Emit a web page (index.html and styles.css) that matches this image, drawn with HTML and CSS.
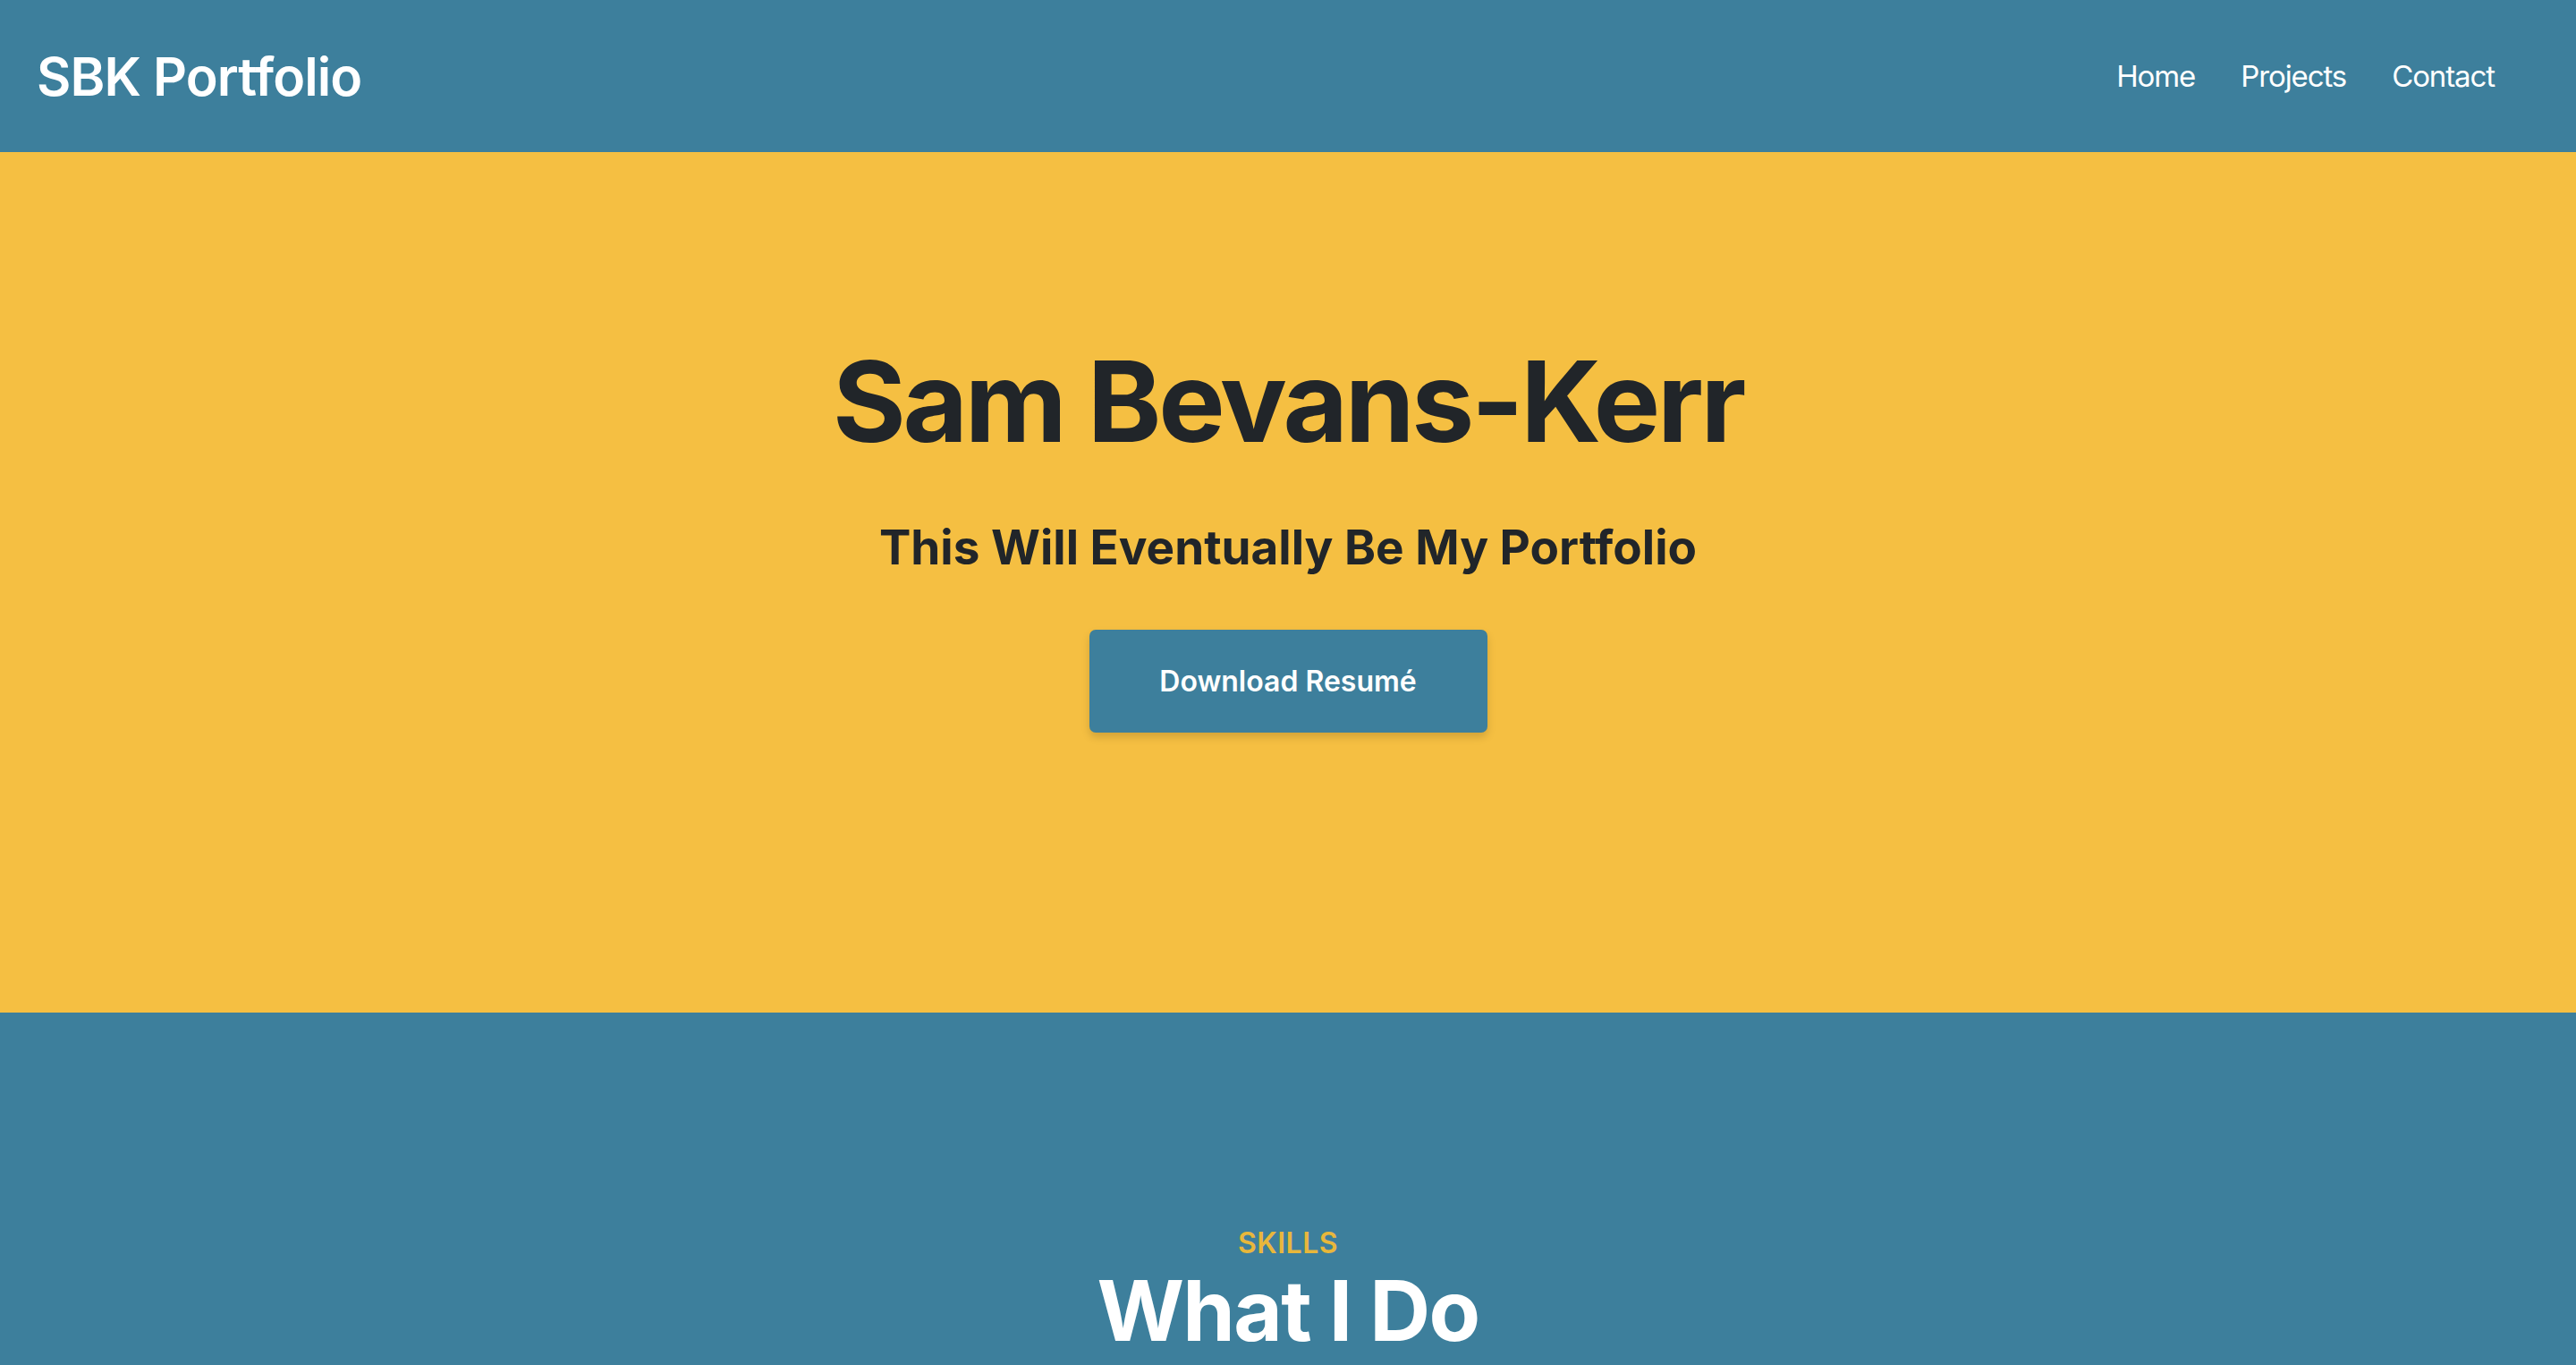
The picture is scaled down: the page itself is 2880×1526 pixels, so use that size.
FILE: index.html
```html
<!DOCTYPE html>
<html lang="en">
<head>
<meta charset="utf-8">
<title>SBK Portfolio</title>
<link rel="stylesheet" href="styles.css">
</head>
<body>
<header class="site-header">
  <a class="brand" href="#">SBK Portfolio</a>
  <nav class="nav">
    <a class="nav-link" href="#">Home</a>
    <a class="nav-link" href="#">Projects</a>
    <a class="nav-link" href="#">Contact</a>
  </nav>
</header>
<section class="hero">
  <h1 class="hero-title">Sam Bevans-Kerr</h1>
  <h2 class="hero-subtitle">This Will Eventually Be My Portfolio</h2>
  <a class="btn-resume" href="#">Download Resumé</a>
</section>
<section class="skills">
  <p class="eyebrow">SKILLS</p>
  <h2 class="section-title">What I Do</h2>
</section>
</body>
</html>
```
FILE: styles.css
```css
* { box-sizing: border-box; }
html, body {
  margin: 0;
  padding: 0;
  height: 1526px;
  overflow: hidden;
}
body {
  font-family: Inter, "Noto Sans", sans-serif;
  font-variant-ligatures: no-common-ligatures;
  background: #3d7f9c;
}
a { text-decoration: none; }

.site-header {
  height: 170px;
  background: #3d7f9c;
  display: flex;
  align-items: center;
  justify-content: space-between;
  padding: 0 91px 0 41px;
}
.brand {
  color: #ffffff;
  font-size: 59px;
  font-weight: 600;
  line-height: 1;
  letter-spacing: -0.9px;
}
.nav {
  display: flex;
  gap: 51px;
}
.nav-link {
  color: #ffffff;
  font-size: 33px;
  font-weight: 400;
  line-height: 1;
  letter-spacing: -1.1px;
}

.hero {
  height: 962px;
  background: #f5bf42;
  display: flex;
  flex-direction: column;
  align-items: center;
  padding-top: 204px;
  color: #212529;
}
.hero-title {
  margin: 0;
  font-size: 125px;
  font-weight: 700;
  line-height: 1.2;
  letter-spacing: -3.3px;
}
.hero-subtitle {
  margin: 57px 0 0;
  font-size: 53px;
  font-weight: 700;
  line-height: 1.2;
}
.btn-resume {
  margin-top: 59px;
  width: 445px;
  height: 115px;
  display: inline-flex;
  align-items: center;
  justify-content: center;
  background: #3d7f9c;
  color: #ffffff;
  font-size: 32px;
  font-weight: 600;
  border-radius: 7px;
  box-shadow: 0 5px 10px rgba(0, 0, 0, 0.15);
}

.skills {
  background: #3d7f9c;
  padding: 239px 0 4px;
  text-align: center;
}
.eyebrow {
  margin: 0;
  color: #e8b73b;
  font-size: 32px;
  font-weight: 600;
  line-height: 1.2;
  letter-spacing: 0.5px;
}
.section-title {
  margin: 0;
  color: #ffffff;
  font-size: 94px;
  font-weight: 700;
  line-height: 1.2;
  letter-spacing: -1.6px;
}
```
